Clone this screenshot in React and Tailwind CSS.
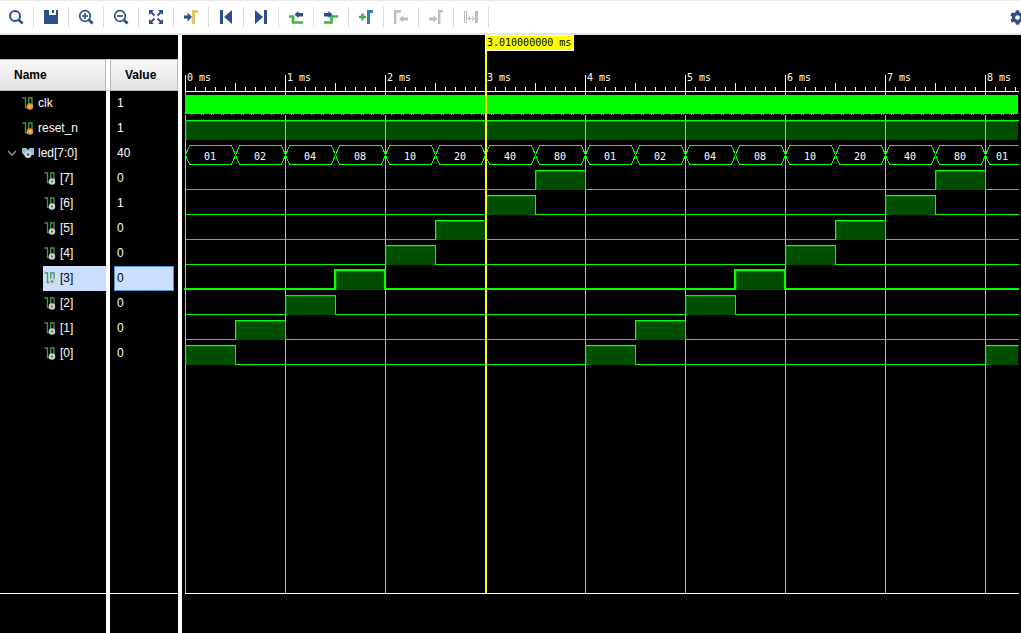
import { useLayoutEffect, useRef, useState } from "react";
import { FaCog } from "react-icons/fa";

const NAVY = "#2f4d86";
const GREEN = "#3fb53f";
const GOLD = "#e3c566";
const BLUE = "#2f80b8";
const GRAY = "#bdbdbd";

// ── Toolbar icons, 16x16 each ──
const TOOLS = [
  {
    label: "Search",
    icon: (
      <g fill="none" stroke={NAVY} strokeWidth="2">
        <circle cx="7" cy="7" r="5" />
        <path d="M10.8 10.8L14.6 14.6" strokeWidth="2.6" />
      </g>
    ),
  },
  {
    label: "Save",
    icon: (
      <g fill={NAVY}>
        <path d="M1 1h5v5h7V1h2v14H1z" />
        <rect x="9" y="1" width="2" height="3" />
      </g>
    ),
  },
  {
    label: "Zoom in",
    icon: (
      <g fill="none" stroke={NAVY} strokeWidth="1.7">
        <circle cx="7" cy="7" r="5.3" />
        <path d="M4 7h6M7 4v6" />
        <path d="M11 11L14.6 14.6" strokeWidth="2.8" />
      </g>
    ),
  },
  {
    label: "Zoom out",
    icon: (
      <g fill="none" stroke={NAVY} strokeWidth="1.7">
        <circle cx="7" cy="7" r="5.3" />
        <path d="M4 7h6" />
        <path d="M11 11L14.6 14.6" strokeWidth="2.8" />
      </g>
    ),
  },
  {
    label: "Zoom fit",
    icon: (
      <g fill={NAVY} stroke={NAVY}>
        <path d="M1 1h5L1 6zM15 1v5L10 1zM1 15v-5l5 5zM15 15h-5l5-5z" stroke="none" />
        <path d="M3 3l3.5 3.5M13 3L9.5 6.5M3 13l3.5-3.5M13 13L9.5 9.5" strokeWidth="1.8" />
      </g>
    ),
  },
  {
    label: "Go to cursor",
    icon: (
      <>
        <path d="M1 6.5h3.500V3.500L9 8l-4.500 4.500v-3H1z" fill={NAVY} />
        <path d="M10.5 15V2.500H15" fill="none" stroke={GOLD} strokeWidth="3" />
      </>
    ),
  },
  {
    label: "Go to start",
    icon: <path d="M2 1h3v14H2zM14 1v14L6 8z" fill={NAVY} />,
  },
  {
    label: "Go to end",
    icon: <path d="M11 1h3v14h-3zM2 1v14l8-7z" fill={NAVY} />,
  },
  {
    label: "Previous transition",
    icon: (
      <>
        <path d="M1 7.500h4v6h10" fill="none" stroke={GREEN} strokeWidth="2.600" />
        <path d="M6.500 5.500L10.500 2v2H15v3.400h-4.500V9z" fill={NAVY} />
      </>
    ),
  },
  {
    label: "Next transition",
    icon: (
      <>
        <path d="M1 13.500h7.500v-6H15" fill="none" stroke={GREEN} strokeWidth="2.600" />
        <path d="M9.500 5.500L5.500 2v2H1v3.400h4.500V9z" fill={NAVY} />
      </>
    ),
  },
  {
    label: "Add marker",
    icon: (
      <>
        <path d="M1 8h7M4.500 4.500v7" fill="none" stroke={GREEN} strokeWidth="2.400" />
        <path d="M10.500 15V2.500H15" fill="none" stroke={BLUE} strokeWidth="3" />
      </>
    ),
  },
  {
    label: "Previous marker",
    disabled: true,
    icon: (
      <>
        <path d="M2.200 15V2.200H8" fill="none" stroke={GRAY} strokeWidth="2.400" />
        <path d="M6 10L10 6.500v2h5v3h-5v2z" fill={GRAY} />
      </>
    ),
  },
  {
    label: "Next marker",
    disabled: true,
    icon: (
      <>
        <path d="M11.200 15V2.200H15" fill="none" stroke={GRAY} strokeWidth="2.400" />
        <path d="M9.500 10L5.500 6.500v2H1v3h4.500v2z" fill={GRAY} />
      </>
    ),
  },
  {
    label: "Swap cursors",
    disabled: true,
    icon: (
      <>
        <path d="M1.500 2.500h2v11h-2z" fill="none" stroke={GRAY} />
        <path d="M12 2h3v12h-3zM4 9.500L7 7v5zM12 9.500L9 7v5zM6 9h4v1H6z" fill={GRAY} />
      </>
    ),
  },
];

// ── Signals ──
const SIGNALS = [
  { name: "clk", value: "1", kind: "clock" },
  { name: "reset_n", value: "1", kind: "high" },
  { name: "led[7:0]", value: "40", kind: "bus" },
  ...[7, 6, 5, 4, 3, 2, 1, 0].map((bit) => ({
    name: `[${bit}]`,
    value: bit === 6 ? "1" : "0",
    kind: "bit",
    bit,
    selected: bit === 3,
  })),
];

const BUS_VALUES = ["01", "02", "04", "08", "10", "20", "40", "80"];

const ROW = 25;
const RULER = 56;
const X0 = 1; // time zero inside the plot
const MS = 100; // pixels per millisecond
const STEP = 50; // one led step
const CURSOR = X0 + 3 * MS;

function SignalIcon({ badge, dot }) {
  return (
    <svg width="12" height="14" viewBox="0 0 12 14" className="shrink-0" aria-hidden="true">
      <path d="M0.500 2h3v9.500h3.200V2H10v7" fill="none" stroke="#3c9a4c" strokeWidth="1.300" />
      <circle cx="8" cy="10.500" r="3.200" fill={badge} />
      <circle cx="8" cy="10.500" r="1" fill={dot} />
    </svg>
  );
}

function BusIcon() {
  return (
    <svg width="12" height="14" viewBox="0 0 12 14" className="shrink-0" aria-hidden="true">
      <path d="M0 2h4.500l1.500 2 1.500-2H12v7H9l-3 2-3-1-3-3z" fill="#8fbdd3" />
      <circle cx="6" cy="8.500" r="3.500" fill="#d4d4d4" />
      <circle cx="6" cy="8.500" r="1.200" fill="#555" />
    </svg>
  );
}

function Toolbar() {
  return (
    <header className="flex h-[35px] items-center overflow-hidden border-t border-b-2 border-t-[#ebebeb] border-b-[#e4e4e6] bg-white">
      <div className="-ml-px flex shrink-0">
        {TOOLS.map(({ label, icon, disabled }) => (
          <button
            key={label}
            type="button"
            aria-label={label}
            disabled={disabled}
            className="flex h-5 w-[35px] items-center justify-center border-r border-[#d9d9d9]"
          >
            <svg width="16" height="16" viewBox="0 0 16 16" aria-hidden="true">
              {icon}
            </svg>
          </button>
        ))}
      </div>
      <button type="button" aria-label="Settings" className="-mr-1 ml-auto shrink-0">
        <FaCog size={15} color={NAVY} />
      </button>
    </header>
  );
}

function NameCell({ name, kind, selected }) {
  if (kind === "bit") {
    return (
      <div
        className={`ml-[43px] flex h-[25px] items-center gap-1 pb-[2px] pl-px ${
          selected ? "bg-[#ccdeff] text-black" : ""
        }`}
      >
        <SignalIcon badge="#cfcfcf" dot="#555" />
        {name}
      </div>
    );
  }
  return (
    <div className="flex h-[25px] items-center pb-[2px]">
      <div className="flex w-[22px] shrink-0 justify-center pl-px">
        {kind === "bus" && (
          <button type="button" aria-label="Collapse led" aria-expanded="true">
            <svg width="10" height="6" viewBox="0 0 10 6" aria-hidden="true">
              <path d="M1 1l4 4 4-4" fill="none" stroke="#9a9a9a" strokeWidth="1.300" />
            </svg>
          </button>
        )}
      </div>
      <div className="flex items-center gap-1">
        {kind === "bus" ? <BusIcon /> : <SignalIcon badge="#f0952c" dot="#ffd9a0" />}
        {name}
      </div>
    </div>
  );
}

function SignalPanel() {
  const head =
    "h-8 border-y border-y-[#b9b9b9] bg-linear-to-b from-[#f8f8f8] to-[#e2e2e4] p-0 text-left font-bold text-black";
  return (
    <section className="flex w-[182px] shrink-0 flex-col border-r-4 border-white pt-6 text-[12px] leading-4">
      <table className="w-full table-fixed border-separate border-spacing-0">
        <thead>
          <tr>
            <th className={`${head} w-[110px] border-r-4 border-r-white`}>
              <div className="flex h-[30px] items-center border-r border-[#b9b9b9] pl-[14px]">Name</div>
            </th>
            <th className={head}>
              <div className="flex h-[30px] items-center border-x border-[#b9b9b9] pl-[14px]">Value</div>
            </th>
          </tr>
        </thead>
        <tbody>
          {SIGNALS.map((s) => (
            <tr key={s.name}>
              <td className="border-r-4 border-white p-0">
                <NameCell {...s} />
              </td>
              <td className="p-0">
                <div
                  className={`mr-1 ml-1 flex h-[25px] items-center border pb-[2px] pl-[2px] ${
                    s.selected ? "border-[#4596d4] bg-[#ccdeff] text-black" : "border-transparent"
                  }`}
                >
                  {s.value}
                </div>
              </td>
            </tr>
          ))}
        </tbody>
      </table>
      <div className="flex-1">
        <div className="h-full w-[110px] border-r-4 border-white" />
      </div>
      <div className="h-10 border-t border-white">
        <div className="h-full w-[110px] border-r-4 border-white" />
      </div>
    </section>
  );
}

function Ruler({ width }) {
  const ticks = [];
  for (let i = 0; X0 + i * 10 < width; i++) {
    const top = i % 10 === 0 ? 40 : i % 5 === 0 ? 48 : 52;
    ticks.push(<rect key={i} x={X0 + i * 10} y={top} width="1" height={RULER - top} />);
  }
  const labels = [];
  for (let ms = 0; X0 + ms * MS + 28 < width; ms++) {
    labels.push(
      <text key={ms} x={X0 + ms * MS + 2} y="46">
        {ms} ms
      </text>
    );
  }
  return (
    <g fill="#fff">
      {ticks}
      <rect x={X0} y={RULER} width={width} height="1" />
      {labels}
    </g>
  );
}

function Grid({ width }) {
  const lines = [];
  for (let x = X0; x < width; x += MS) {
    lines.push(<rect key={x} x={x} y={RULER} width="1" height="100%" />);
  }
  return <g fill="#bbb">{lines}</g>;
}

function ClockLane({ y, width }) {
  const edges = [];
  for (let x = X0 + 6; x < width; x += 10) {
    edges.push(<path key={x} d={`M${x} ${y + 23}h1v1h-1zM${x + 2} ${y + 23}h1v1h-1z`} />);
  }
  return (
    <g fill="#0f0">
      <rect x={X0} y={y + 23} width={width} height="1" fill="#000" />
      <rect x={X0} y={y + 4} width={width - 2} height="19" />
      {edges}
    </g>
  );
}

// Shaded area of a high level, with its brighter inner edge
function HighFill({ x, y, w }) {
  return (
    <g fill="#0f0" fillOpacity="0.3">
      <rect x={x} y={y + 5} width={w} height="19" />
      <path d={`M${x + 1} ${y + 24}V${y + 5}H${x + w}v1H${x + 2}v18z`} />
    </g>
  );
}

function HighLane({ y, width }) {
  return (
    <g>
      <HighFill x={X0} y={y} w={width - X0 - 1} />
      <path
        d={`M${X0 + 0.5} ${y + 24}V${y + 4.5}H${width}`}
        fill="none"
        stroke="#0f0"
        shapeRendering="crispEdges"
      />
    </g>
  );
}

function BusLane({ y, width }) {
  const cells = [];
  for (let i = 0; X0 + i * STEP < width; i++) {
    const x = X0 + i * STEP + 0.5;
    const end = Math.min(x + STEP, width);
    const full = x + STEP <= width;
    const top = y + 4.5;
    const mid = y + 14;
    const bottom = y + 23.5;
    cells.push(
      <g key={i}>
        <path
          d={
            full
              ? `M${x} ${mid}L${x + 4} ${top}H${end - 4}L${end} ${mid}L${end - 4} ${bottom}H${x + 4}z`
              : `M${end} ${top}H${x + 4}L${x} ${mid}L${x + 4} ${bottom}H${end}`
          }
          fill="none"
          stroke="#0f0"
          shapeRendering="crispEdges"
        />
        {end - x > 20 && (
          <text x={Math.floor((x + end) / 2)} y={y + 19} fill="#fff" textAnchor="middle">
            {BUS_VALUES[i % 8]}
          </text>
        )}
      </g>
    );
  }
  return <g>{cells}</g>;
}

function BitLane({ y, width, bit, selected }) {
  const half = selected ? 0 : 0.5;
  const high = y + 4 + half + (selected ? 1 : 0);
  const low = y + 23 + half;
  const fills = [];
  let d = `M${selected ? 0 : X0} ${low}`;
  for (let x = X0 + bit * STEP; x < width; x += 8 * STEP) {
    const end = Math.min(x + STEP, width);
    fills.push(<HighFill key={x} x={x} y={y} w={end - x - (end === width ? 1 : 0)} />);
    d += `H${x + half}V${high - (selected ? 1 : 0)}H${end + half}`;
    if (end < width) d += `V${low}`;
  }
  if (!d.endsWith(`H${width + half}`)) d += `H${width}`;
  return (
    <g>
      {fills}
      <path
        d={d}
        fill="none"
        stroke="#0f0"
        strokeWidth={selected ? 2 : 1}
        shapeRendering="crispEdges"
      />
    </g>
  );
}

function Cursor() {
  return (
    <g>
      <rect x={CURSOR} y="0" width="2" height="100%" fill="#ff0" />
      <rect x={CURSOR + 0.5} y="0.5" width="88" height="15" fill="#ff0" stroke="#fff" />
      <text x={CURSOR + 2} y="11" fill="#000">
        3.010000000 ms
      </text>
    </g>
  );
}

function WavePanel() {
  const ref = useRef(null);
  const [width, setWidth] = useState(835);

  useLayoutEffect(() => {
    const measure = () => setWidth(Math.round(ref.current.getBoundingClientRect().width));
    measure();
    window.addEventListener("resize", measure);
    return () => window.removeEventListener("resize", measure);
  }, []);

  return (
    <section className="flex min-w-0 flex-1 flex-col pr-[2px] pl-[2px]">
      <svg
        ref={ref}
        className="min-h-[340px] w-full flex-1 overflow-hidden font-['DejaVu_Sans_Mono',monospace] text-[10px]"
        role="img"
        aria-label="Waveforms"
      >
        <Grid width={width} />
        <Ruler width={width} />
        {SIGNALS.map((s, i) => {
          const y = RULER + i * ROW;
          if (s.kind === "clock") return <ClockLane key={s.name} y={y} width={width} />;
          if (s.kind === "high") return <HighLane key={s.name} y={y} width={width} />;
          if (s.kind === "bus") return <BusLane key={s.name} y={y} width={width} />;
          return <BitLane key={s.name} y={y} width={width} bit={s.bit} selected={s.selected} />;
        })}
        <Cursor />
      </svg>
      <div className="ml-px h-10 border-t border-white" />
    </section>
  );
}

export default function App() {
  return (
    <div className="flex min-h-screen flex-col bg-black font-['Liberation_Sans',Arial,sans-serif] text-white">
      <Toolbar />
      <main className="flex flex-1">
        <SignalPanel />
        <WavePanel />
      </main>
    </div>
  );
}
